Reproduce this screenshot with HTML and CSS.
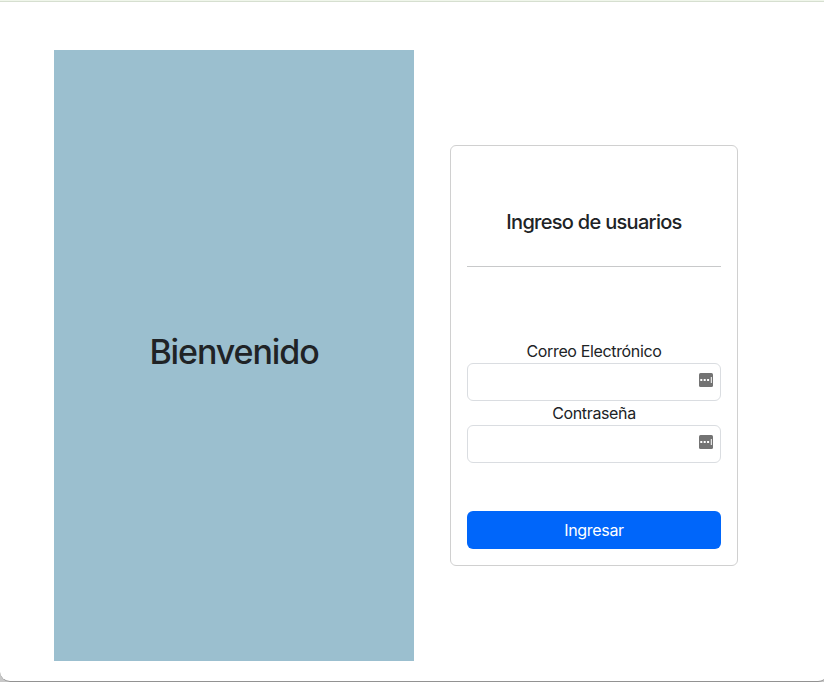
FILE: index.html
```
<!DOCTYPE html>
<html lang="es">
<head>
<meta charset="utf-8">
<title>Ingreso de usuarios</title>
<link rel="stylesheet" href="styles.css">
</head>
<body>
<div class="window">
  <main class="layout">
    <section class="welcome"><h1 class="welcome-title">Bienvenido</h1></section>
    <form class="card">
      <h2 class="card-title">Ingreso de usuarios</h2>
      <hr class="divider">
      <label class="label" for="email">Correo Electrónico</label>
      <div class="field">
        <input class="input" id="email" type="email">
        <svg class="key" viewBox="0 0 14 14"><rect width="14" height="14" rx="1.5" fill="#737373"/><path d="M1.3 6h2v2h-2zM4.7 6h2v2h-2zM8.1 6h2v2h-2zM11.8 4h1v6h-1z" fill="#fff"/></svg>
      </div>
      <label class="label" for="password">Contraseña</label>
      <div class="field">
        <input class="input" id="password" type="password">
        <svg class="key" viewBox="0 0 14 14"><rect width="14" height="14" rx="1.5" fill="#737373"/><path d="M1.3 6h2v2h-2zM4.7 6h2v2h-2zM8.1 6h2v2h-2zM11.8 4h1v6h-1z" fill="#fff"/></svg>
      </div>
      <button class="submit" type="button">Ingresar</button>
    </form>
  </main>
</div>
</body>
</html>
```
FILE: styles.css
```
* { box-sizing: border-box; }
body {
  margin: 0;
  height: 682px;
  overflow: hidden;
  background: #c8c8c8;
  color: #202326;
  font-family: Inter, "Liberation Sans", sans-serif;
  font-size: 16px;
  line-height: 24px;
}
.window {
  width: 828px;
  height: 682px;
  border-top: 1px solid #f0f6eb;
  border-bottom: 1px solid #929292;
  border-radius: 0 0 10px 10px;
  background: #fff;
  box-shadow: inset 0 1px #d6dfd0;
}
.layout {
  display: flex;
  align-items: center;
  gap: 36px;
  padding: 49px 0 0 54px;
}
.welcome {
  display: flex;
  align-items: center;
  justify-content: center;
  width: 360px;
  height: 611px;
  padding-bottom: 8px;
  background: #9bbfcf;
}
.welcome-title {
  margin: 0;
  font-size: 34px;
  font-weight: 500;
  line-height: 42px;
  letter-spacing: -1.1px;
}
.card {
  display: flex;
  flex-direction: column;
  width: 288px;
  height: 421px;
  padding: 64px 16px 16px;
  border: 1px solid #d0d0d0;
  border-radius: 6px;
  background: #fff;
  text-align: center;
}
.card-title {
  margin: 0;
  font-size: 20px;
  font-weight: 500;
  line-height: 24px;
  letter-spacing: -0.7px;
}
.divider {
  width: 100%;
  margin: 32px 0 72px;
  border: 0;
  border-top: 1px solid #c8c9ca;
}
.label { letter-spacing: -0.35px; }
.field { position: relative; height: 38px; }
.input {
  display: block;
  width: 100%;
  height: 38px;
  padding: 6px 32px 6px 12px;
  border: 1px solid #dadde1;
  border-radius: 6px;
  background: #fff;
  font: inherit;
}
.key {
  position: absolute;
  top: 10px;
  right: 8px;
  width: 14px;
  height: 14px;
}
.submit {
  height: 38px;
  margin-top: auto;
  padding: 0;
  border: 0;
  border-radius: 6px;
  background: #0066fa;
  color: #fff;
  font: inherit;
  letter-spacing: -0.3px;
}
```
